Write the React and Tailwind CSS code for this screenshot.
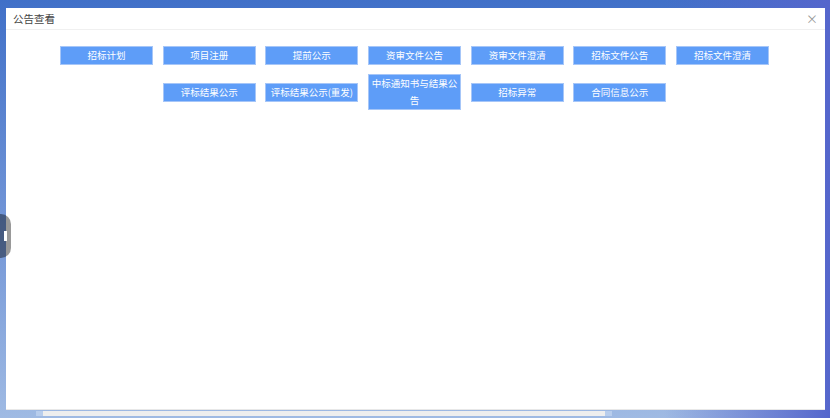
import React from 'react';

const notices = [
    '招标计划',
    '项目注册',
    '提前公示',
    '资审文件公告',
    '资审文件澄清',
    '招标文件公告',
    '招标文件澄清',
    '评标结果公示',
    '评标结果公示(重发)',
    '中标通知书与结果公告',
    '招标异常',
    '合同信息公示',
];

const NoticeButton = ({ label }) => (
    <button
        type="button"
        className="w-[93px] px-[2px] border border-[#a6c6f8] bg-[#5e9df8] text-white text-[9.5px] leading-[17px] text-center cursor-pointer hover:bg-[#4a8ef5]"
    >
        {label}
    </button>
);

const App = () => {
    return (
        <div
            className="relative w-[830px] h-[418px] overflow-hidden pt-[8px] pl-[6px] pr-[5px] pb-[8px] bg-[linear-gradient(to_right,transparent_80%,#5566cc_100%),linear-gradient(to_bottom,#4070c8_0%,#6f93d6_50%,#9fbae3_100%)]"
            style={{ fontFamily: '"Noto Sans CJK SC", "Noto Sans", sans-serif' }}
        >
            <div className="h-full bg-white flex flex-col border-b border-[#e8e8e8]">
                <div className="h-[22px] flex items-center justify-between pl-[7px] pr-[7px] border-b border-[#f0f0f0]">
                    <span className="text-[10.5px] text-[#444]">公告查看</span>
                    <span className="text-[12px] leading-none text-[#999] cursor-pointer">×</span>
                </div>
                <div className="flex flex-wrap justify-center items-center gap-x-[9.66px] gap-y-[9px] pt-[16px] pl-[8px] pr-[10px]">
                    {notices.map(n => <NoticeButton key={n} label={n} />)}
                </div>
            </div>

            {/* side drawer handle */}
            <div className="absolute left-0 top-[214px] w-[11px] h-[44px] rounded-r-[10px] bg-black/40 flex items-center pl-[4px]">
                <div className="w-[3px] h-[10px] bg-white" />
            </div>

            {/* horizontal scroll track */}
            <div className="absolute left-[36px] bottom-[2px] h-[5px] w-[576px] flex">
                <div className="w-[7px] bg-[#b8cdec]" />
                <div className="flex-1 bg-[#eeeeee]" />
                <div className="w-[7px] bg-[#b8cdec]" />
            </div>
        </div>
    );
};

export default App;
